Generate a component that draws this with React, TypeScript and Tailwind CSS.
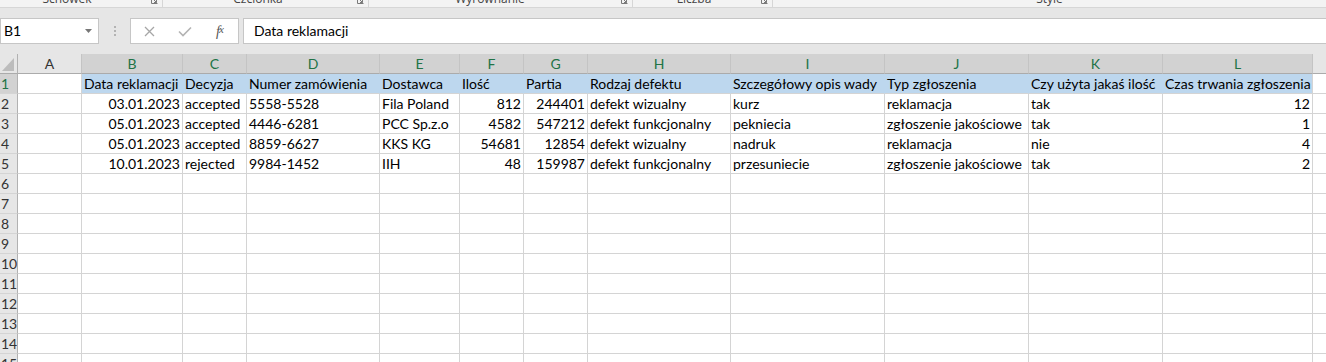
import React from "react";

const cols = [
  { l: "A", w: 64 },
  { l: "B", w: 101 },
  { l: "C", w: 64 },
  { l: "D", w: 133 },
  { l: "E", w: 80 },
  { l: "F", w: 64 },
  { l: "G", w: 64 },
  { l: "H", w: 143 },
  { l: "I", w: 154 },
  { l: "J", w: 144 },
  { l: "K", w: 134 },
  { l: "L", w: 150 },
];

const header = [
  "Data reklamacji",
  "Decyzja",
  "Numer zamówienia",
  "Dostawca",
  "Ilość",
  "Partia",
  "Rodzaj defektu",
  "Szczegółowy opis wady",
  "Typ zgłoszenia",
  "Czy użyta jakaś ilość",
  "Czas trwania zgłoszenia",
];

const rows = [
  ["03.01.2023", "accepted", "5558-5528", "Fila Poland", "812", "244401", "defekt wizualny", "kurz", "reklamacja", "tak", "12"],
  ["05.01.2023", "accepted", "4446-6281", "PCC Sp.z.o", "4582", "547212", "defekt funkcjonalny", "pekniecia", "zgłoszenie jakościowe", "tak", "1"],
  ["05.01.2023", "accepted", "8859-6627", "KKS KG", "54681", "12854", "defekt wizualny", "nadruk", "reklamacja", "nie", "4"],
  ["10.01.2023", "rejected", "9984-1452", "IIH", "48", "159987", "defekt funkcjonalny", "przesuniecie", "zgłoszenie jakościowe", "tak", "2"],
];

// columns B, F, G, L hold numbers/dates -> right aligned (index in data row)
const rightCols = [0, 4, 5, 10];

const gridCls =
  "grid grid-cols-[18px_64px_101px_64px_133px_80px_64px_64px_143px_154px_144px_134px_150px_1fr]";

const cell =
  "h-[20px] border-r border-b border-[#d4d4d4] leading-[19px] whitespace-nowrap overflow-hidden bg-white";

const Launcher = () => (
  <svg width="7" height="7" viewBox="0 0 7 7" className="-mt-[3px] mr-[4px] shrink-0">
    <path d="M0.5 0.5V6.5H6.5" fill="none" stroke="#7a7a7a" />
    <path d="M2.5 2.5L5.5 5.5M5.5 3V5.5H3" fill="none" stroke="#7a7a7a" />
  </svg>
);

const RibbonGroup = ({ label, w, lw, launcher = true }: { label: string; w: string; lw: string; launcher?: boolean }) => (
  <div className={`${w} h-full flex border-r border-[#d6d6d6] shrink-0 overflow-hidden`}>
    <div className={`${lw} text-center text-[12px] leading-[16px] -mt-[9px] text-[#444]`}>{label}</div>
    <div className="flex-1" />
    {launcher && <Launcher />}
  </div>
);

export default function App() {
  return (
    <div className="w-[1326px] h-[362px] overflow-hidden bg-[#e6e6e6] font-['Lato',sans-serif] text-[14px] text-black">
      {/* ribbon remnants */}
      <div className="h-[8px] bg-[#f3f3f3] border-b border-[#d6d6d6] flex overflow-hidden font-['Open_Sans',sans-serif]">
        <RibbonGroup label="Schowek" w="w-[163px]" lw="w-[134px]" />
        <RibbonGroup label="Czcionka" w="w-[206px]" lw="w-[190px]" />
        <RibbonGroup label="Wyrównanie" w="w-[264px]" lw="w-[242px]" />
        <RibbonGroup label="Liczba" w="w-[140px]" lw="w-[122px]" />
        <div className="flex-1 flex overflow-hidden">
          <div className="w-[716px] text-center text-[12px] leading-[16px] -mt-[9px] text-[#444]">Style</div>
        </div>
      </div>

      <div className="h-[10px]" />

      {/* formula bar */}
      <div className="h-[26px] flex">
        <div className="w-[99px] h-full bg-white border border-[#c6c6c6] flex items-center pl-[3px] pr-[6px] leading-[24px]">
          <span className="flex-1">B1</span>
          <svg width="7" height="4" viewBox="0 0 7 4">
            <path d="M0 0H7L3.5 4Z" fill="#777" />
          </svg>
        </div>
        <div className="w-[31px] h-full flex flex-col items-center justify-center gap-[2px]">
          <div className="w-[2px] h-[2px] bg-[#b3b3b3]" />
          <div className="w-[2px] h-[2px] bg-[#b3b3b3]" />
          <div className="w-[2px] h-[2px] bg-[#b3b3b3]" />
        </div>
        <div className="w-[109px] h-full bg-white border border-[#c6c6c6] flex items-center">
          <div className="w-[36px] flex justify-center pl-[1px]">
            <svg width="11" height="11" viewBox="0 0 11 11">
              <path d="M1 1L10 10M10 1L1 10" stroke="#a6a6a6" strokeWidth="1.3" />
            </svg>
          </div>
          <div className="w-[36px] flex justify-center">
            <svg width="14" height="11" viewBox="0 0 14 11">
              <path d="M1 5.5L5 9.5L13 1.5" fill="none" stroke="#b3b3b3" strokeWidth="1.6" />
            </svg>
          </div>
          <div className="w-[34px] flex justify-center font-['Liberation_Serif',serif] italic text-[14px] text-[#555]">
            f<span className="text-[11px] -ml-[1px]">x</span>
          </div>
        </div>
        <div className="w-[4px]" />
        <div className="flex-1 h-full bg-white border border-[#c6c6c6] border-r-0 pl-[10px] leading-[24px]">
          Data reklamacji
        </div>
      </div>

      <div className="h-[10px]" />

      {/* sheet */}
      <div className={gridCls}>
        {/* column header row */}
        <div className="h-[20px] bg-[#e6e6e6] border-r border-b border-r-[#b1b1b1] border-b-[#ababab] flex items-end justify-end pb-[2px] pr-[3px]">
          <svg width="12" height="13" viewBox="0 0 12 13">
            <path d="M12 0V13H0Z" fill="#bcbcbc" />
          </svg>
        </div>
        {cols.map((c) => (
          <div
            key={c.l}
            className={`h-[20px] border-r border-b border-r-[#c4c4c4] border-b-[#ababab] text-center leading-[19px] ${
              c.l === "A" ? "bg-[#e6e6e6] text-[#333]" : "bg-[#d2d2d2] text-[#217346]"
            }`}
          >
            {c.l}
          </div>
        ))}
        <div className="h-[20px] bg-[#e6e6e6] border-b border-b-[#ababab]" />

        {/* rows */}
        {Array.from({ length: 15 }, (_, i) => {
          const n = i + 1;
          const data = n === 1 ? header : rows[n - 2];
          return (
            <React.Fragment key={n}>
              <div
                className={`h-[20px] border-r border-b border-r-[#b1b1b1] border-b-[#d4d4d4] pl-[1px] leading-[19px] whitespace-nowrap overflow-hidden ${
                  n === 1 ? "bg-[#d2d2d2] text-[#217346]" : "bg-[#e6e6e6] text-[#333]"
                }`}
              >
                {n}
              </div>
              <div className={cell} />
              {cols.slice(1).map((c, j) => {
                const v = data ? data[j] : "";
                if (n === 1) {
                  return (
                    <div
                      key={c.l}
                      className={`h-[20px] border-r border-b border-b-[#d4d4d4] bg-[#bdd7ee] pl-[2px] leading-[19px] whitespace-nowrap overflow-hidden ${
                        j === 10 ? "border-r-[#d4d4d4]" : "border-r-[#bdd7ee]"
                      }`}
                    >
                      {v}
                    </div>
                  );
                }
                return (
                  <div
                    key={c.l}
                    className={`${cell} ${rightCols.includes(j) ? "text-right pr-[2px]" : "pl-[2px]"}`}
                  >
                    {v}
                  </div>
                );
              })}
              <div className="h-[20px] border-b border-[#d4d4d4] bg-white" />
            </React.Fragment>
          );
        })}
      </div>
    </div>
  );
}
